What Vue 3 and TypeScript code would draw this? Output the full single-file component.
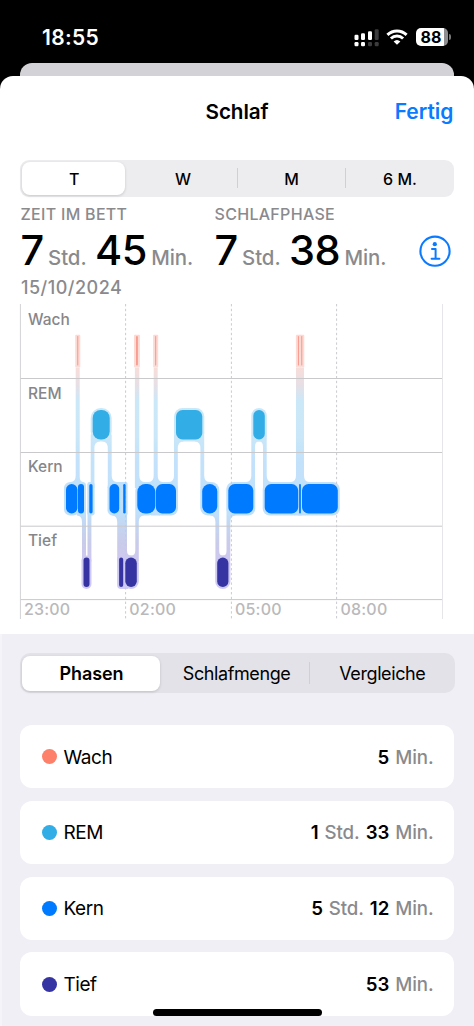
<script setup lang="ts">
type Stage = 'wake' | 'rem' | 'core' | 'deep'

interface Block {
  stage: Stage
  x0: number
  x1: number
}

interface Link {
  x0: number
  x1: number
  from: Stage
  to: Stage
  tl?: number
  tr?: number
  bl?: number
  br?: number
}

interface Part {
  value: string
  unit: string
}

const top: Record<Stage, number> = { wake: 336, rem: 410, core: 484, deep: 557.5 }
const blockHeight = 29.5
const halo = 2

const blocks: Block[] = [
  { stage: 'wake', x0: 77.2, x1: 78.3 },
  { stage: 'wake', x0: 136, x1: 137.9 },
  { stage: 'wake', x0: 155.1, x1: 156.2 },
  { stage: 'wake', x0: 297.9, x1: 299 },
  { stage: 'wake', x0: 301.2, x1: 302.3 },
  { stage: 'rem', x0: 92.7, x1: 109.7 },
  { stage: 'rem', x0: 176, x1: 202.3 },
  { stage: 'rem', x0: 253.3, x1: 264.8 },
  { stage: 'core', x0: 66, x1: 77.4 },
  { stage: 'core', x0: 78, x1: 84 },
  { stage: 'core', x0: 89.3, x1: 92.6 },
  { stage: 'core', x0: 109.5, x1: 119.2 },
  { stage: 'core', x0: 123.2, x1: 125.6 },
  { stage: 'core', x0: 137.3, x1: 155.3 },
  { stage: 'core', x0: 155.9, x1: 176 },
  { stage: 'core', x0: 202.2, x1: 217.3 },
  { stage: 'core', x0: 228.3, x1: 253.3 },
  { stage: 'core', x0: 264.7, x1: 298.2 },
  { stage: 'core', x0: 299.1, x1: 300.9 },
  { stage: 'core', x0: 302, x1: 337.8 },
  { stage: 'deep', x0: 83.5, x1: 89.5 },
  { stage: 'deep', x0: 119.1, x1: 123.2 },
  { stage: 'deep', x0: 125.3, x1: 136.8 },
  { stage: 'deep', x0: 217.2, x1: 228.4 },
]

const links: Link[] = [
  { x0: 75.7, x1: 79.7, from: 'wake', to: 'core', bl: 5, br: 4 },
  { x0: 134.9, x1: 139.3, from: 'wake', to: 'core', br: 5 },
  { x0: 153.7, x1: 157.7, from: 'wake', to: 'core', bl: 5, br: 5 },
  { x0: 296, x1: 304, from: 'wake', to: 'core', bl: 5, br: 5 },
  { x0: 90.7, x1: 94.4, from: 'rem', to: 'core', tr: 5.5 },
  { x0: 107.8, x1: 111.7, from: 'rem', to: 'core', tl: 5.5, br: 5 },
  { x0: 174, x1: 177.8, from: 'rem', to: 'core', tr: 5.5, bl: 5 },
  { x0: 200.4, x1: 204.2, from: 'rem', to: 'core', tl: 5.5, br: 5 },
  { x0: 251.3, x1: 255, from: 'rem', to: 'core', tr: 4, bl: 5 },
  { x0: 263, x1: 266.7, from: 'rem', to: 'core', tl: 4, br: 5 },
  { x0: 82, x1: 86, from: 'core', to: 'deep', tl: 5 },
  { x0: 87.5, x1: 91.4, from: 'core', to: 'deep' },
  { x0: 117.2, x1: 127, from: 'core', to: 'deep', tl: 5, br: 4 },
  { x0: 135.3, x1: 138.8, from: 'core', to: 'deep', tr: 5, bl: 4 },
  { x0: 215.4, x1: 219.2, from: 'core', to: 'deep', tl: 5, br: 3.5 },
  { x0: 226.5, x1: 230.3, from: 'core', to: 'deep', tr: 5, bl: 3.5 },
]

// Short phases are drawn as pills, longer ones as rounded boxes.
function radius(b: Block, grow = 0): number {
  const width = b.x1 - b.x0
  return (width < 19 ? Math.min(8, width / 2) : 6.5) + grow
}

// A vertical band that reaches into the blocks it joins and flares where it meets them.
function linkPath(l: Link): string {
  const { x0, x1, tl = 0, tr = 0, bl = 0, br = 0 } = l
  const y0 = top[l.from] + blockHeight + halo
  const y1 = top[l.to] - halo
  const reachUp = l.from === 'wake' ? 0 : 7
  const reachDown = 6
  return [
    `M${x0 - tl} ${y0 - reachUp}`,
    `V${y0}`,
    `Q${x0} ${y0} ${x0} ${y0 + tl * 1.3}`,
    `V${y1 - bl * 1.3}`,
    `Q${x0} ${y1} ${x0 - bl} ${y1}`,
    `V${y1 + reachDown}`,
    `H${x1 + br}`,
    `V${y1}`,
    `Q${x1} ${y1} ${x1} ${y1 - br * 1.3}`,
    `V${y0 + tr * 1.3}`,
    `Q${x1} ${y0} ${x1 + tr} ${y0}`,
    `V${y0 - reachUp}Z`,
  ].join('')
}

const rowLabels = [
  { text: 'Wach', y: 325 },
  { text: 'REM', y: 398.7 },
  { text: 'Kern', y: 472.4 },
  { text: 'Tief', y: 546 },
]
const ticks = [
  { text: '23:00', x: 24 },
  { text: '02:00', x: 129.3 },
  { text: '05:00', x: 235 },
  { text: '08:00', x: 340.5 },
]

const ranges = ['T', 'W', 'M', '6 M.']
const tabs = ['Phasen', 'Schlafmenge', 'Vergleiche']

const totals: { title: string; parts: Part[] }[] = [
  { title: 'ZEIT IM BETT', parts: [{ value: '7', unit: 'Std.' }, { value: '45', unit: 'Min.' }] },
  { title: 'SCHLAFPHASE', parts: [{ value: '7', unit: 'Std.' }, { value: '38', unit: 'Min.' }] },
]

const phases: { stage: Stage; name: string; parts: Part[] }[] = [
  { stage: 'wake', name: 'Wach', parts: [{ value: '5', unit: 'Min.' }] },
  { stage: 'rem', name: 'REM', parts: [{ value: '1', unit: 'Std.' }, { value: '33', unit: 'Min.' }] },
  { stage: 'core', name: 'Kern', parts: [{ value: '5', unit: 'Std.' }, { value: '12', unit: 'Min.' }] },
  { stage: 'deep', name: 'Tief', parts: [{ value: '53', unit: 'Min.' }] },
]
</script>

<template>
  <div class="screen">
    <header class="status">
      <span class="clock">18:55</span>
      <div class="indicators">
        <svg class="signal" width="26" height="18" viewBox="0 0 26 18">
          <g fill="#fff">
            <rect x="0.5" y="5.7" width="4" height="5.2" rx="1.2" />
            <rect x="7" y="4.2" width="4" height="6.7" rx="1.2" />
            <rect x="14" y="2.2" width="4" height="8.7" rx="1.2" />
            <rect x="0.5" y="13" width="4" height="4.2" rx="1.2" />
            <rect x="7" y="13" width="4" height="4.2" rx="1.2" />
          </g>
          <g fill="#3c3c3e">
            <rect x="20.7" y="0.3" width="4" height="10.6" rx="1.2" />
            <rect x="14" y="13" width="4" height="4.2" rx="1.2" />
            <rect x="20.7" y="13" width="4" height="4.2" rx="1.2" />
          </g>
        </svg>
        <svg class="wifi" width="22" height="16" viewBox="0 0 22 16">
          <g fill="none" stroke="#fff" stroke-width="2.9">
            <path d="M1.4 5.9 A13.6 13.6 0 0 1 20.6 5.9" />
            <path d="M4.9 9.6 A8.6 8.6 0 0 1 17.1 9.6" />
          </g>
          <path d="M11 15.8 L7.6 12.4 A5.1 5.1 0 0 1 14.4 12.4 Z" fill="#fff" />
        </svg>
        <div class="battery"><span>88</span></div>
        <i class="cap"></i>
      </div>
    </header>
    <div class="backsheet"></div>

    <main class="sheet">
      <div class="nav">
        <span></span>
        <h1>Schlaf</h1>
        <a class="done">Fertig</a>
      </div>

      <div class="ranges">
        <div v-for="(r, i) in ranges" :key="r" class="range" :class="{ on: i === 0, split: i > 1 }">
          <span>{{ r }}</span>
        </div>
      </div>

      <section class="totals">
        <div v-for="t in totals" :key="t.title" class="total">
          <div class="title">{{ t.title }}</div>
          <div class="amount">
            <template v-for="p in t.parts" :key="p.unit">
              <b>{{ p.value }}</b><small>{{ p.unit }}</small>
            </template>
          </div>
        </div>
        <svg class="info" width="32" height="32" viewBox="0 0 32 32">
          <circle cx="16" cy="16.2" r="14.6" fill="none" stroke="#0a7aff" stroke-width="2.1" />
          <circle cx="15.8" cy="9.2" r="2.1" fill="#0a7aff" />
          <path d="M13 14.1H16.6V23.8M12.6 23.8H20.4" fill="none" stroke="#0a7aff" stroke-width="2" stroke-linecap="round" stroke-linejoin="round" />
        </svg>
      </section>
      <div class="date">15/10/2024</div>

      <svg class="chart" width="474" height="322" viewBox="0 300 474 322">
        <defs>
          <linearGradient id="glow" gradientUnits="userSpaceOnUse" x1="0" y1="334" x2="0" y2="590">
            <stop offset="0" stop-color="#fdd9d2" />
            <stop offset="0.12" stop-color="#fbddd8" />
            <stop offset="0.2" stop-color="#e6dfe5" />
            <stop offset="0.26" stop-color="#cbe8f8" />
            <stop offset="0.4" stop-color="#c9e7f8" />
            <stop offset="0.5" stop-color="#c3e1fa" />
            <stop offset="0.7" stop-color="#bfe0fb" />
            <stop offset="0.75" stop-color="#c4d5f1" />
            <stop offset="0.82" stop-color="#cacbea" />
            <stop offset="0.87" stop-color="#cdc8ef" />
            <stop offset="1" stop-color="#cfcaf4" />
          </linearGradient>
        </defs>

        <g fill="url(#glow)">
          <path v-for="(l, i) in links" :key="'l' + i" :d="linkPath(l)" />
          <rect
            v-for="(b, i) in blocks"
            :key="'h' + i"
            :x="b.x0 - halo"
            :y="top[b.stage] - halo + (b.stage === 'wake' ? 0.8 : 0)"
            :width="b.x1 - b.x0 + halo * 2"
            :height="blockHeight + halo * 2 - (b.stage === 'wake' ? 0.8 : 0)"
            :rx="b.stage === 'wake' ? 1 : radius(b, b.stage === 'core' ? 0.5 : halo)"
          />
          <rect x="151" y="482" width="9" height="33.5" />
          <rect x="117" y="482" width="9" height="33.5" />
          <rect x="294" y="482" width="12" height="33.5" />
          <rect x="120" y="555.5" width="8" height="33.5" />
        </g>

        <g stroke="#c9c9cb" stroke-width="1">
          <path d="M20 378.5H442.5M20 452.5H442.5M20 526.2H442.5M20 599.6H442.5" />
          <path d="M20.4 304V619" stroke="#d3d3d5" />
          <path d="M442.5 304V619" stroke="#e6e6e8" />
          <path d="M125.6 304V619M231.4 304V619M336.6 304V619" stroke="#cbcbcf" stroke-dasharray="2.4 2.4" />
        </g>

        <rect
          v-for="(b, i) in blocks"
          :key="'b' + i"
          :class="b.stage"
          :x="b.x0"
          :y="top[b.stage]"
          :width="b.x1 - b.x0"
          :height="blockHeight"
          :rx="radius(b)"
        />

        <text v-for="r in rowLabels" :key="r.text" class="row-label" x="28" :y="r.y">{{ r.text }}</text>
        <text v-for="t in ticks" :key="t.text" class="tick" :x="t.x" y="615.3">{{ t.text }}</text>
      </svg>

      <section class="details">
        <div class="tabs">
          <div v-for="(t, i) in tabs" :key="t" class="tab" :class="{ on: i === 0, split: i > 1 }">
            <span>{{ t }}</span>
          </div>
        </div>
        <div v-for="p in phases" :key="p.name" class="card">
          <i class="dot" :class="p.stage"></i>
          <span class="name">{{ p.name }}</span>
          <span class="duration">
            <template v-for="d in p.parts" :key="d.unit">
              <b>{{ d.value }}</b><small>{{ d.unit }}</small>
            </template>
          </span>
        </div>
      </section>
    </main>
    <div class="home"></div>
  </div>
</template>

<style>
html,
body {
  margin: 0;
  background: #000;
}
</style>

<style scoped>
.screen {
  position: relative;
  width: 474px;
  height: 1026px;
  overflow: hidden;
  background: #000;
  color: #000;
  font-family: Inter, "Liberation Sans", sans-serif;
  display: flex;
  flex-direction: column;
}
.status {
  height: 63px;
  flex: none;
  display: flex;
  justify-content: space-between;
  padding: 0 23.5px 0 42px;
  box-sizing: border-box;
  color: #fff;
}
.clock {
  font-size: 21px;
  font-weight: 600;
  line-height: 24px;
  margin-top: 26px;
  letter-spacing: 0.3px;
}
.indicators {
  display: flex;
  align-items: flex-start;
  padding-top: 28px;
}
.signal {
  margin-top: 1px;
}
.wifi {
  margin: 1px 0 0 6px;
}
.battery {
  width: 32px;
  height: 18px;
  margin-left: 8px;
  border-radius: 5px;
  background: linear-gradient(90deg, #fff 88%, #8e8e90 88%);
  color: #000;
  text-align: center;
  font-size: 16px;
  font-weight: 700;
  line-height: 18px;
}
.battery span {
  margin-right: 1px;
}
.cap {
  width: 2px;
  height: 6px;
  margin: 6px 0 0 1px;
  border-radius: 0 2px 2px 0;
  background: #77777a;
}
.backsheet {
  height: 13px;
  flex: none;
  margin: 0 20px;
  border-radius: 12px 12px 0 0;
  background: #d3d2d7;
}
.sheet {
  position: relative;
  flex: 1;
  background: #fff;
  border-radius: 13px 13px 0 0;
}
.nav {
  height: 84px;
  padding: 0 20.5px;
  display: grid;
  grid-template-columns: 1fr auto 1fr;
  align-items: start;
}
h1 {
  margin: 23px 0 0;
  font-size: 20.7px;
  line-height: 26px;
  font-weight: 600;
  letter-spacing: -0.1px;
}
.done {
  margin-top: 23px;
  justify-self: end;
  color: #0a7aff;
  font-size: 21px;
  line-height: 26px;
  font-weight: 600;
}
.ranges,
.tabs {
  display: flex;
  box-sizing: border-box;
  background: #ededf0;
}
.ranges {
  margin: 0 20.5px 0 20px;
  height: 37px;
  border-radius: 9px;
  padding: 2px 0 2px 2px;
}
.range,
.tab {
  flex: 1;
  display: flex;
  align-items: center;
  justify-content: center;
  position: relative;
}
.range {
  font-size: 16px;
  font-weight: 500;
}
.range.on {
  flex: 0 0 103px;
  margin-right: 3px;
}
.on {
  background: #fff;
  border-radius: 8px;
  box-shadow: 0 1px 3px rgba(0, 0, 0, 0.16);
}
.split::before {
  content: "";
  position: absolute;
  left: 0;
  top: 6px;
  bottom: 7px;
  width: 1px;
  background: #d0d0d4;
}
.range span,
.tab span {
  padding-left: 1.4px;
}
.totals {
  display: flex;
  height: 79px;
  padding-left: 20.5px;
  position: relative;
}
.total {
  width: 194px;
}
.title {
  margin-top: 7px;
  font-size: 16px;
  line-height: 20px;
  font-weight: 500;
  color: #8a8a8d;
  letter-spacing: 0.3px;
}
.amount {
  display: flex;
  align-items: baseline;
  height: 52px;
  line-height: 52px;
  white-space: nowrap;
}
.amount b {
  font-size: 41.5px;
  font-weight: 500;
  letter-spacing: -0.5px;
}
.amount small {
  font-size: 20.4px;
  font-weight: 500;
  color: #8a8a8d;
  margin: 0 8.5px 0 4.3px;
  letter-spacing: -0.05px;
}
.info {
  position: absolute;
  left: 419px;
  top: 38px;
}
.date {
  margin-left: 21px;
  height: 24px;
  line-height: 24px;
  font-size: 18px;
  font-weight: 500;
  color: #8a8a8d;
  letter-spacing: 0.5px;
}
.chart {
  display: block;
}
.row-label {
  font-size: 15.5px;
  font-weight: 500;
  fill: #86868a;
}
.tick {
  font-size: 16px;
  fill: #b9b9bb;
  font-weight: 500;
  letter-spacing: 0.2px;
}
.wake {
  fill: #f79d91;
  background: #fd806b;
}
.rem {
  fill: #32ade6;
  background: #32ade6;
}
.core {
  fill: #007aff;
  background: #007aff;
}
.deep {
  fill: #3634a3;
  background: #3634a3;
}
.details {
  margin-top: 12px;
  height: 392px;
  background: #f0eff5;
  box-shadow: inset 2px 0 #f5f5f9;
  padding: 19px 20.5px 0 20px;
  box-sizing: border-box;
  overflow: hidden;
}
.tabs {
  height: 40px;
  margin-right: -1px;
  margin-bottom: 32px;
  background: #e3e2e8;
  border-radius: 10px;
  padding: 2.5px 0 2.5px 1.5px;
}
.tab {
  font-size: 18px;
  letter-spacing: -0.4px;
}
.tab.on {
  flex: 0 0 138.5px;
  margin-right: 3px;
  font-weight: 600;
  letter-spacing: -0.1px;
}
.card {
  height: 63.3px;
  margin-bottom: 12.5px;
  border-radius: 12px;
  background: #fff;
  display: flex;
  align-items: center;
  padding: 0 20px 0 21.5px;
  box-sizing: border-box;
}
.dot {
  width: 15px;
  height: 15px;
  border-radius: 50%;
  margin-right: 7px;
}
.name {
  flex: 1;
  font-size: 19px;
  letter-spacing: -0.45px;
  padding-top: 1px;
}
.duration {
  display: flex;
  align-items: baseline;
  gap: 6px;
  font-size: 18.7px;
  letter-spacing: -0.1px;
  padding-top: 1px;
}
.duration b {
  font-weight: 600;
}
.duration small {
  font-size: 18.7px;
  font-weight: 500;
  color: #8a8a8d;
}
.home {
  position: absolute;
  left: 152.5px;
  top: 1009px;
  width: 169.5px;
  height: 6.5px;
  border-radius: 4px;
  background: #000;
}
</style>
